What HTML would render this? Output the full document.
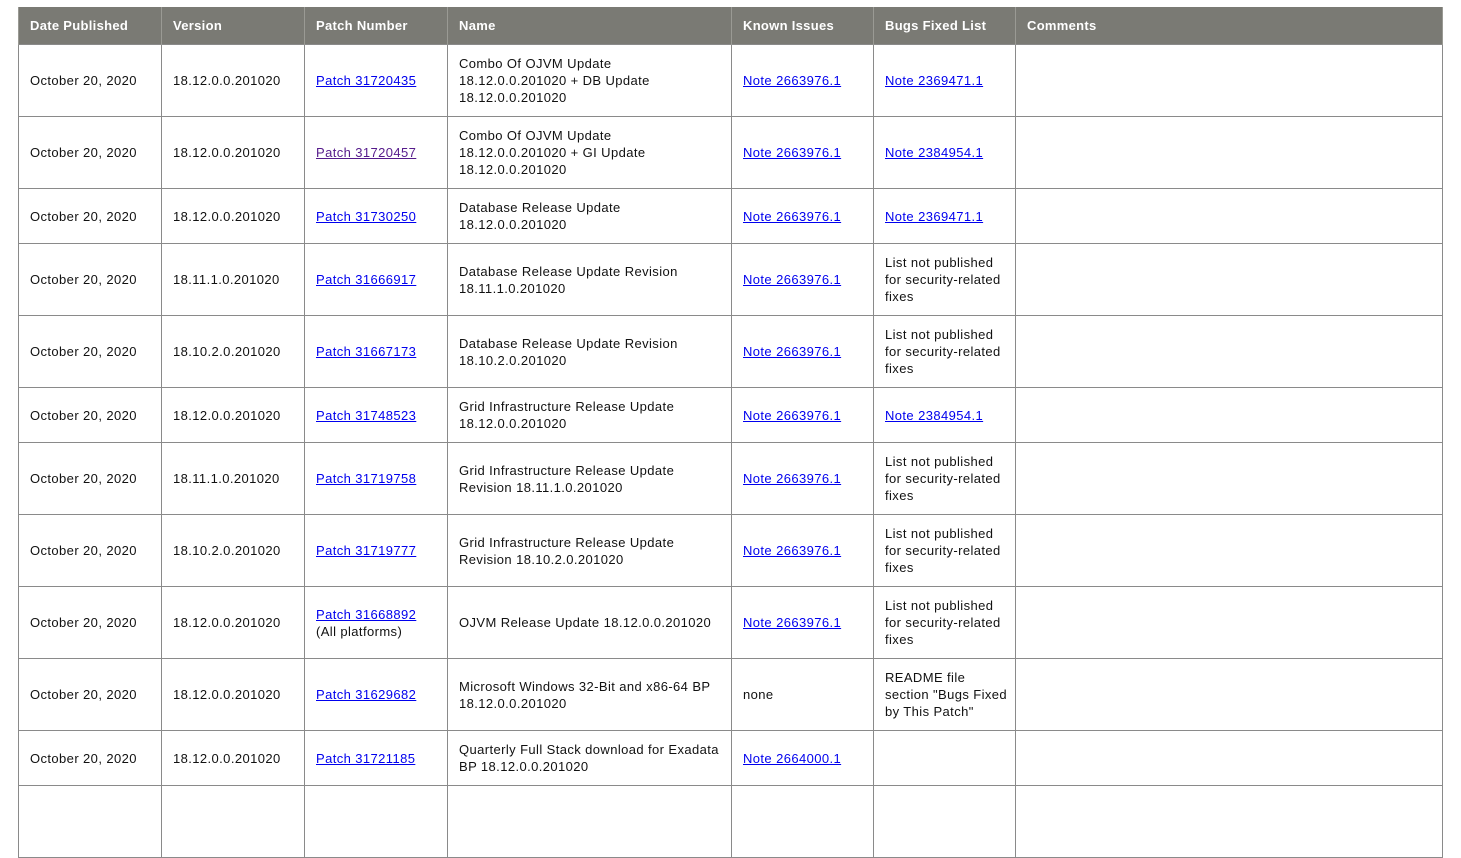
<!DOCTYPE html>
<html><head><meta charset="utf-8"><style>
html,body{margin:0;padding:0;background:#fff;width:1461px;height:792px;overflow:hidden}
table{position:absolute;left:18px;top:7px;border-collapse:collapse;table-layout:fixed;width:1424px;font-family:"Liberation Sans",sans-serif;font-size:13px;color:#111;letter-spacing:0.4px}
th{background:#7a7a74;color:#fff;font-weight:bold;text-align:left;height:37px;padding:0 0 0 11px;border-left:1px solid #9a9a94;border-right:1px solid #9a9a94;font-size:13px;letter-spacing:0.3px}
td{border:1px solid #8a8a8a;padding:0 4px 0 11px;line-height:17px;vertical-align:middle}
tr.a td{height:71px}
tr.b td{height:54px}
a{color:#0000ee;text-decoration:underline}
a.v{color:#551a8b}
</style></head><body>
<table>
<colgroup><col style="width:143px"><col style="width:143px"><col style="width:143px"><col style="width:284px"><col style="width:142px"><col style="width:142px"><col style="width:427px"></colgroup>
<tr><th>Date Published</th><th>Version</th><th>Patch Number</th><th>Name</th><th>Known Issues</th><th>Bugs Fixed List</th><th>Comments</th></tr>
<tr class="a"><td>October 20, 2020</td><td>18.12.0.0.201020</td><td><a>Patch 31720435</a></td><td>Combo Of OJVM Update<br>18.12.0.0.201020 + DB Update<br>18.12.0.0.201020</td><td><a>Note 2663976.1</a></td><td><a>Note 2369471.1</a></td><td></td></tr>
<tr class="a"><td>October 20, 2020</td><td>18.12.0.0.201020</td><td><a class="v">Patch 31720457</a></td><td>Combo Of OJVM Update<br>18.12.0.0.201020 + GI Update<br>18.12.0.0.201020</td><td><a>Note 2663976.1</a></td><td><a>Note 2384954.1</a></td><td></td></tr>
<tr class="b"><td>October 20, 2020</td><td>18.12.0.0.201020</td><td><a>Patch 31730250</a></td><td>Database Release Update<br>18.12.0.0.201020</td><td><a>Note 2663976.1</a></td><td><a>Note 2369471.1</a></td><td></td></tr>
<tr class="a"><td>October 20, 2020</td><td>18.11.1.0.201020</td><td><a>Patch 31666917</a></td><td>Database Release Update Revision<br>18.11.1.0.201020</td><td><a>Note 2663976.1</a></td><td>List not published<br>for security-related<br>fixes</td><td></td></tr>
<tr class="a"><td>October 20, 2020</td><td>18.10.2.0.201020</td><td><a>Patch 31667173</a></td><td>Database Release Update Revision<br>18.10.2.0.201020</td><td><a>Note 2663976.1</a></td><td>List not published<br>for security-related<br>fixes</td><td></td></tr>
<tr class="b"><td>October 20, 2020</td><td>18.12.0.0.201020</td><td><a>Patch 31748523</a></td><td>Grid Infrastructure Release Update<br>18.12.0.0.201020</td><td><a>Note 2663976.1</a></td><td><a>Note 2384954.1</a></td><td></td></tr>
<tr class="a"><td>October 20, 2020</td><td>18.11.1.0.201020</td><td><a>Patch 31719758</a></td><td>Grid Infrastructure Release Update<br>Revision 18.11.1.0.201020</td><td><a>Note 2663976.1</a></td><td>List not published<br>for security-related<br>fixes</td><td></td></tr>
<tr class="a"><td>October 20, 2020</td><td>18.10.2.0.201020</td><td><a>Patch 31719777</a></td><td>Grid Infrastructure Release Update<br>Revision 18.10.2.0.201020</td><td><a>Note 2663976.1</a></td><td>List not published<br>for security-related<br>fixes</td><td></td></tr>
<tr class="a"><td>October 20, 2020</td><td>18.12.0.0.201020</td><td><a>Patch 31668892</a><br>(All platforms)</td><td>OJVM Release Update 18.12.0.0.201020</td><td><a>Note 2663976.1</a></td><td>List not published<br>for security-related<br>fixes</td><td></td></tr>
<tr class="a"><td>October 20, 2020</td><td>18.12.0.0.201020</td><td><a>Patch 31629682</a></td><td>Microsoft Windows 32-Bit and x86-64 BP<br>18.12.0.0.201020</td><td>none</td><td>README file<br>section "Bugs Fixed<br>by This Patch"</td><td></td></tr>
<tr class="b"><td>October 20, 2020</td><td>18.12.0.0.201020</td><td><a>Patch 31721185</a></td><td>Quarterly Full Stack download for Exadata<br>BP 18.12.0.0.201020</td><td><a>Note 2664000.1</a></td><td></td><td></td></tr>
<tr class="a"><td></td><td></td><td></td><td></td><td></td><td></td><td></td></tr>
</table>
</body></html>
